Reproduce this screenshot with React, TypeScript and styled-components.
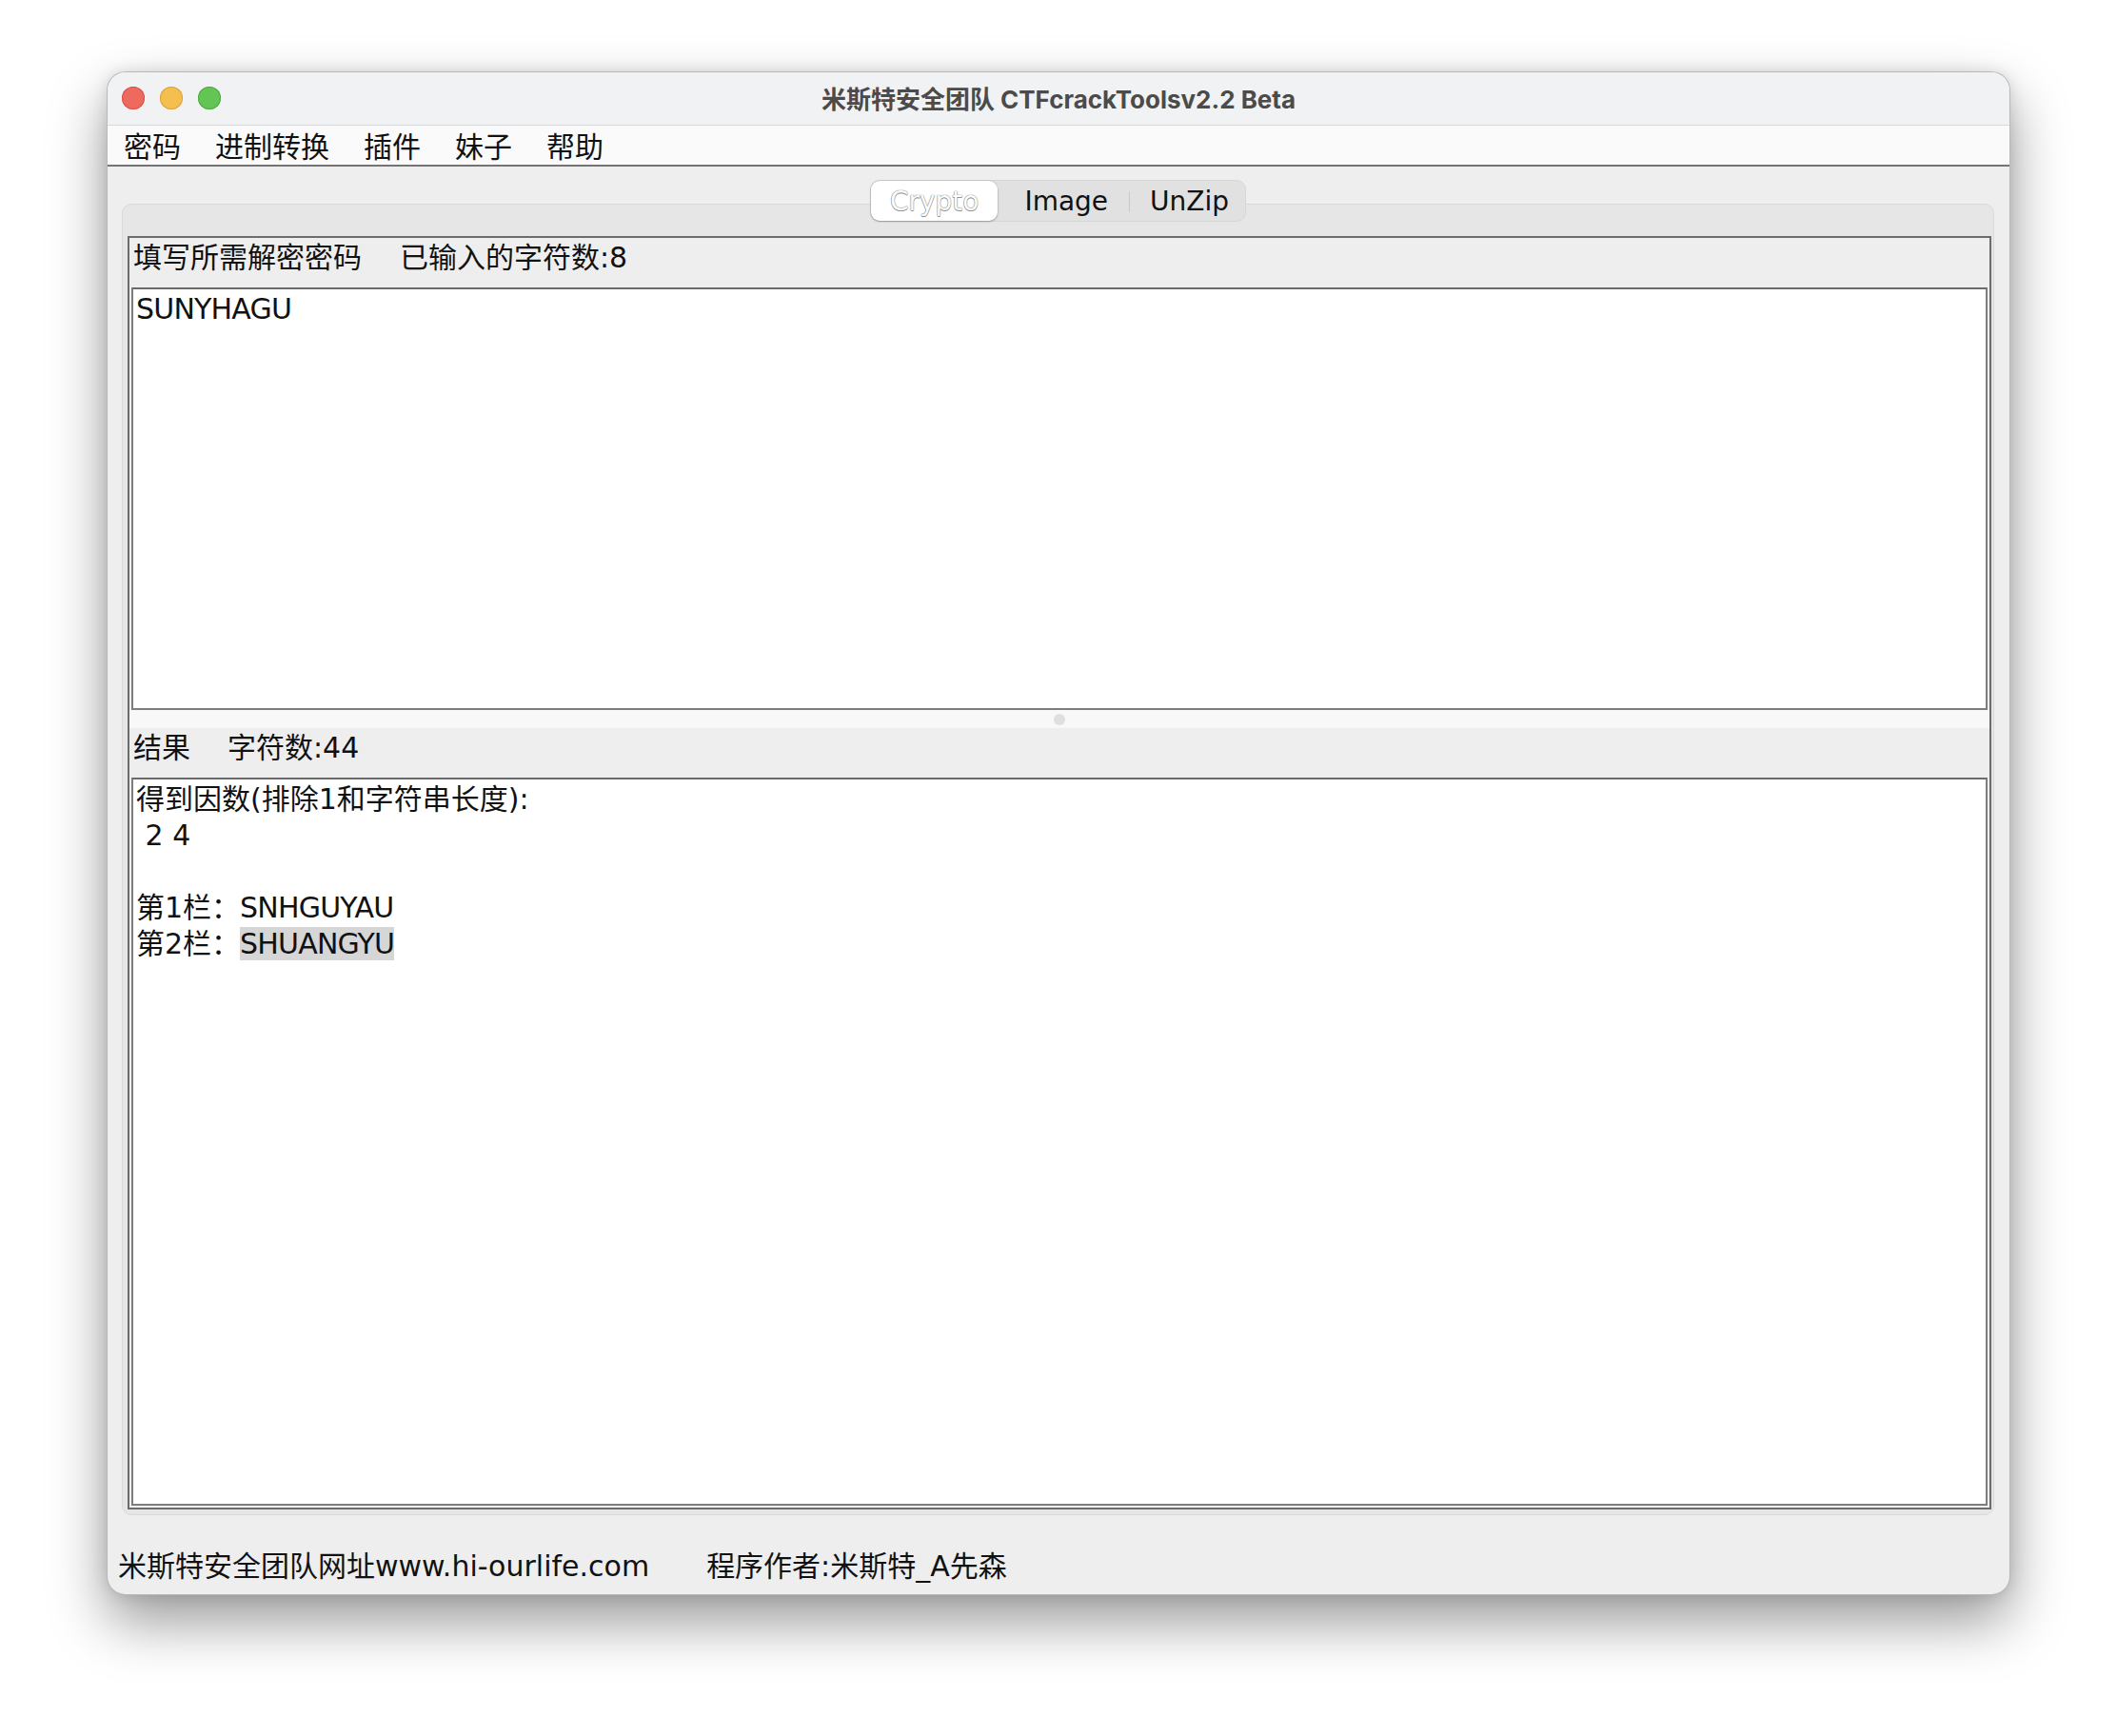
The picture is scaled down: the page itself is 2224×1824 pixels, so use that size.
import styled, { createGlobalStyle } from "styled-components";

const GlobalStyle = createGlobalStyle`
  html, body {
    margin: 0;
    padding: 0;
    background: #ffffff;
  }
  * {
    box-sizing: border-box;
  }
`;

const uiFont = `"DejaVu Sans", "Noto Sans CJK SC", sans-serif`;

const Page = styled.div`
  width: 2224px;
  height: 1824px;
  padding: 75px 112px 0;
  font-family: ${uiFont};
  color: #111;
`;

const Window = styled.div`
  display: flex;
  flex-direction: column;
  width: 2000px;
  height: 1601px;
  border: 1px solid rgba(0, 0, 0, 0.22);
  border-radius: 20px;
  overflow: hidden;
  background: #eeeeee;
  box-shadow: 0 28px 60px rgba(0, 0, 0, 0.4), 0 0 16px rgba(0, 0, 0, 0.12);
`;

const TitleBar = styled.div`
  display: grid;
  grid-template-columns: 1fr auto 1fr;
  align-items: center;
  height: 56px;
  padding: 0 15px 2px;
  background: #f1f2f4;
  border-bottom: 1px solid #d8d8d8;
`;

const Lights = styled.div`
  display: flex;
  gap: 16px;
`;

const Light = styled.span<{ $color: string; $edge: string }>`
  width: 24px;
  height: 24px;
  border-radius: 50%;
  background: ${(p) => p.$color};
  box-shadow: inset 0 0 0 1px ${(p) => p.$edge};
`;

const Title = styled.div`
  font-family: "Inter", "Noto Sans CJK SC", sans-serif;
  font-size: 26px;
  font-weight: 700;
  color: #4b4b4b;
`;

const MenuBar = styled.div`
  display: flex;
  align-items: center;
  gap: 36px;
  height: 43px;
  padding: 0 0 2px 17px;
  background: #fafafa;
  border-bottom: 2px solid #747474;
  font-size: 30px;
`;

const MenuItem = styled.span`
  color: #111;
`;

const Body = styled.div`
  flex: 1;
  display: flex;
  flex-direction: column;
  padding: 14px 16px 0 15px;
`;

const TabStrip = styled.div`
  display: flex;
  justify-content: center;
  margin-bottom: -19px;
  position: relative;
  z-index: 1;
`;

const Segmented = styled.div`
  display: flex;
  align-items: center;
  height: 44px;
  background: #e1e1e1;
  border: 1px solid #d6d6d6;
  border-radius: 10px;
`;

const Segment = styled.div<{ $active?: boolean; $divider?: boolean; $pad: string }>`
  display: flex;
  align-items: center;
  height: ${(p) => (p.$active ? "42px" : "100%")};
  padding: ${(p) => p.$pad};
  font-size: 28px;
  position: relative;
  color: ${(p) => (p.$active ? "#fdfdfd" : "#111")};
  background: ${(p) => (p.$active ? "#ffffff" : "transparent")};
  border-radius: 9px;
  box-shadow: ${(p) =>
    p.$active ? "0 1px 2px rgba(0,0,0,0.25), 0 0 0 0.5px rgba(0,0,0,0.12)" : "none"};
  text-shadow: ${(p) =>
    p.$active ? "0 0 1px #6e6e6e, 0 0 1px #6e6e6e, 0 1px 0 #9a9a9a" : "none"};

  &::before {
    content: "";
    display: ${(p) => (p.$divider ? "block" : "none")};
    position: absolute;
    left: 0;
    top: 11px;
    width: 1px;
    height: 22px;
    background: #c9c9c9;
  }
`;

const Panel = styled.div`
  flex: 1;
  display: flex;
  padding: 33px 2px 5px 5px;
  background: #e6e6e6;
  border: 1px solid #d9d9d9;
  border-radius: 10px;
`;

const SplitPane = styled.div`
  flex: 1;
  display: flex;
  flex-direction: column;
  background: #eeeeee;
  border: 2px solid #6c6c6c;
`;

const LabelRow = styled.div<{ $gap: number }>`
  display: flex;
  gap: ${(p) => p.$gap}px;
  height: 52px;
  padding: 2px 0 0 4px;
  font-size: 30px;
  line-height: 38px;
  background: #eeeeee;
`;

const TextArea = styled.div<{ $grow?: boolean }>`
  ${(p) => (p.$grow ? "flex: 1; margin-bottom: 2px;" : "height: 444px;")}
  margin-left: 2px;
  margin-right: 2px;
  padding: 2px 3px;
  background: #ffffff;
  border: 2px solid #7d7d7d;
  border-top-color: #6a6a6a;
  font-size: 30px;
  line-height: 38px;
  white-space: pre;
`;

const Line = styled.div`
  height: 38px;
`;

const Latin = styled.span`
  letter-spacing: -0.8px;
`;

const Selected = styled(Latin)`
  background: #d6d6d6;
`;

const Divider = styled.div`
  display: flex;
  justify-content: center;
  align-items: center;
  height: 19px;
  background: #f8f8f8;
`;

const Grip = styled.span`
  width: 12px;
  height: 12px;
  border-radius: 50%;
  background: #dfdfdf;
`;

const Footer = styled.div`
  display: flex;
  align-items: center;
  gap: 60px;
  height: 83px;
  padding: 18px 0 0 11px;
  font-size: 30px;
`;

const menus = ["密码", "进制转换", "插件", "妹子", "帮助"];

export default function App() {
  return (
    <Page>
      <GlobalStyle />
      <Window>
        <TitleBar>
          <Lights>
            <Light $color="#ee6a5f" $edge="#d95247" />
            <Light $color="#f5bf4f" $edge="#d9a23a" />
            <Light $color="#62c554" $edge="#4ea83f" />
          </Lights>
          <Title>米斯特安全团队 CTFcrackToolsv2.2 Beta</Title>
          <span />
        </TitleBar>
        <MenuBar>
          {menus.map((m) => (
            <MenuItem key={m}>{m}</MenuItem>
          ))}
        </MenuBar>
        <Body>
          <TabStrip>
            <Segmented>
              <Segment $active $pad="0 20px">
                Crypto
              </Segment>
              <Segment $pad="0 22px 0 28px">Image</Segment>
              <Segment $divider $pad="0 17px 0 22px">
                UnZip
              </Segment>
            </Segmented>
          </TabStrip>
          <Panel>
            <SplitPane>
              <LabelRow $gap={40}>
                <span>填写所需解密密码</span>
                <span>已输入的字符数:8</span>
              </LabelRow>
              <TextArea>
                <Line>
                  <Latin>SUNYHAGU</Latin>
                </Line>
              </TextArea>
              <Divider>
                <Grip />
              </Divider>
              <LabelRow $gap={39}>
                <span>结果</span>
                <span>字符数:44</span>
              </LabelRow>
              <TextArea $grow>
                <Line>得到因数(排除1和字符串长度):</Line>
                <Line> 2 4</Line>
                <Line />
                <Line>
                  第1栏：<Latin>SNHGUYAU</Latin>
                </Line>
                <Line>
                  第2栏：<Selected>SHUANGYU</Selected>
                </Line>
              </TextArea>
            </SplitPane>
          </Panel>
        </Body>
        <Footer>
          <span>米斯特安全团队网址www.hi-ourlife.com</span>
          <span>程序作者:米斯特_A先森</span>
        </Footer>
      </Window>
    </Page>
  );
}
